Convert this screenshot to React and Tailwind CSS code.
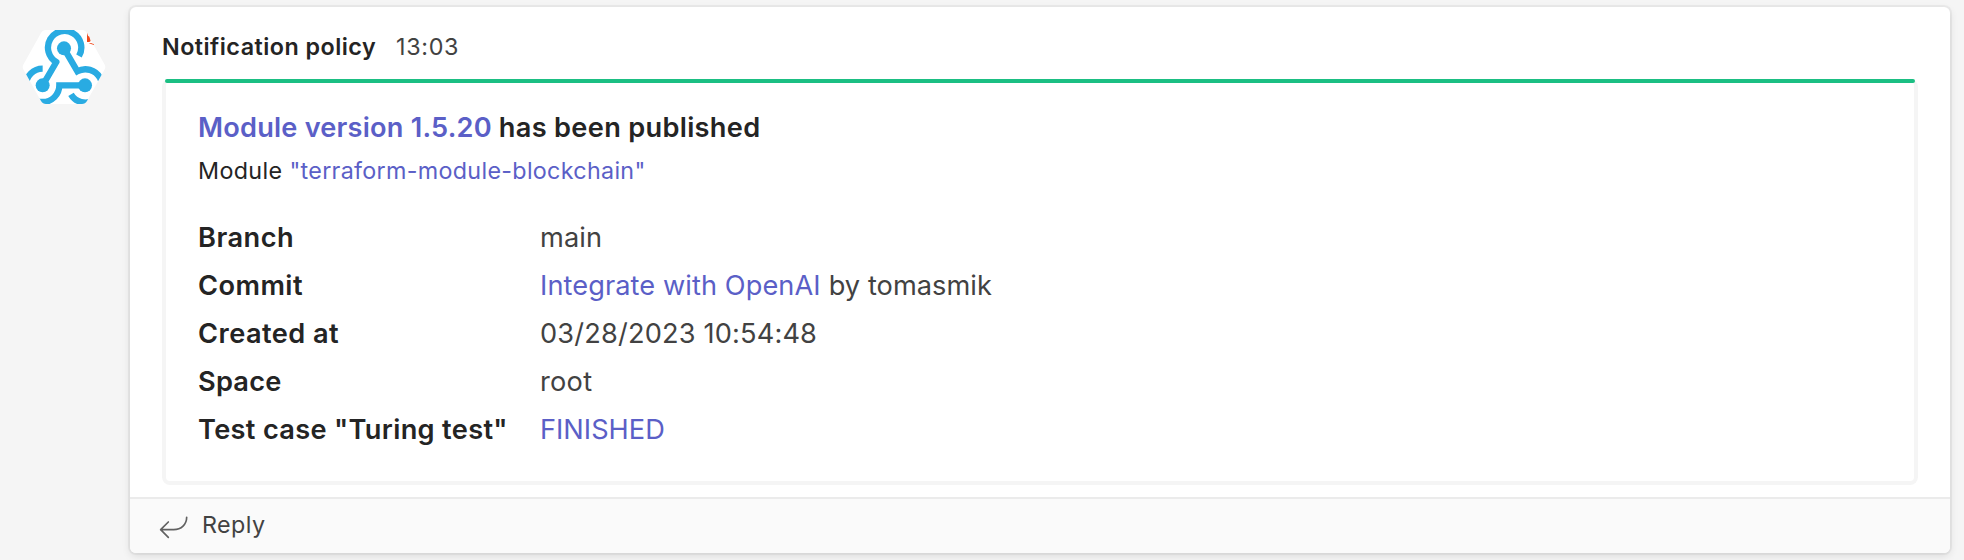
const facts = [
  {
    label: "Branch",
    labelClass: "tracking-[0.5px]",
    value: <span className="tracking-[0.1px]">main</span>,
  },
  {
    label: "Commit",
    labelClass: "tracking-[0.45px]",
    value: (
      <>
        <a className="tracking-[0.08px] text-[#5b5fc7]">Integrate with OpenAI</a>
        <span className="ml-2 tracking-[0.05px]">by tomasmik</span>
      </>
    ),
  },
  {
    label: "Created at",
    labelClass: "tracking-[0.45px]",
    value: <span className="tracking-[0.16px]">03/28/2023 10:54:48</span>,
  },
  {
    label: "Space",
    labelClass: "tracking-[0.2px]",
    value: <span className="tracking-[0.25px]">root</span>,
  },
  {
    label: 'Test case "Turing test"',
    labelClass: "tracking-[0.32px]",
    value: <a className="text-[#5b5fc7]">FINISHED</a>,
  },
];

function WebhookAvatar() {
  return (
    <svg className="h-[86px] w-[94px] shrink-0" viewBox="0 0 282 258" fill="none">
      <defs>
        <clipPath id="hexagon">
          <path d="M15 134Q12 129 15 124L69 27Q74 18 84 18H192Q202 18 207 27L261 124Q264 129 261 134L207 231Q202 240 192 240H84Q74 240 69 231Z" />
        </clipPath>
      </defs>
      <g clipPath="url(#hexagon)">
        <rect width="282" height="258" fill="#fff" />
        <g stroke="#29abe2" strokeWidth="19">
          <path d="M183 96A50 50 0 1 0 115 114L74 184" strokeLinejoin="round" />
          <path d="M138 73L178 142A50 50 0 1 1 159 211" />
          <path d="M74 134A50 50 0 1 0 124 184H201" />
        </g>
        <g fill="#29abe2">
          <circle cx="138" cy="73" r="21" />
          <circle cx="74" cy="184" r="21" />
          <circle cx="201" cy="184" r="21" />
        </g>
      </g>
      <path d="M207 26L210 35L214 38L218 51L214 54H207ZM212 59L219 57L228 61V63L219 60Z" fill="#f04a1d" />
    </svg>
  );
}

function ReplyIcon() {
  return (
    <svg className="h-[34px] w-10 shrink-0" viewBox="0 0 120 102" fill="none" stroke="#616161" strokeWidth="5" strokeLinecap="round" strokeLinejoin="round">
      <path d="M43 42L20 65L43 88M20 65H59C82 65 98 49 98 28" />
    </svg>
  );
}

export default function App() {
  return (
    <div className="flex h-[560px] w-full overflow-hidden bg-[#f5f5f5] pl-[18px] font-[Inter,sans-serif] text-[#242424]">
      <div className="w-28 shrink-0 pt-6">
        <WebhookAvatar />
      </div>
      <article className="mt-[7px] mr-[14px] flex h-[546px] flex-1 flex-col overflow-hidden rounded-md bg-white shadow-[0_0_0_2px_#0000000a,0_3px_8px_#0000001c]">
        <div className="h-[490px] px-8 pt-6">
          <header className="flex h-8 items-center gap-[18px] text-[23.3px] leading-8">
            <span className="w-[216px] font-semibold tracking-[0.48px] whitespace-nowrap">Notification policy</span>
            <time className="tracking-[0.7px] text-[#424242]">13:03</time>
          </header>
          <section className="relative mt-4 h-[406px] rounded-lg border-4 border-t-0 border-[#f5f5f5] px-7 pt-[31px]">
            <div className="absolute -left-px -right-px top-0 h-1 rounded-full bg-[#1bbf83]" />
            <h2 className="ml-1 text-[27.2px] leading-9 font-semibold">
              <a className="tracking-[0.2px] text-[#5b5fc7]">Module version 1.5.20</a>
              <span className="ml-[7px] tracking-[0.31px]">has been published</span>
            </h2>
            <p className="mt-[9px] ml-1 text-[23.3px] leading-8">
              <span className="tracking-[0.35px]">Module</span>
              <a className="ml-[7px] tracking-[0.31px] text-[#5b5fc7]">"terraform-module-blockchain"</a>
            </p>
            <dl className="mt-[27px] ml-1 grid grid-cols-[342px_1fr] text-[27.2px] leading-[48px]">
              {facts.map((fact) => (
                <div key={fact.label} className="contents">
                  <dt className={`font-semibold whitespace-nowrap ${fact.labelClass}`}>{fact.label}</dt>
                  <dd className="text-[#424242]">{fact.value}</dd>
                </div>
              ))}
            </dl>
          </section>
        </div>
        <footer className="flex flex-1 items-start border-t-2 border-[#ebebeb] bg-[#fafafa] pt-[9px] pl-6 text-[#424242]">
          <ReplyIcon />
          <span className="mt-px ml-2 text-[23.3px] leading-8 tracking-[0.43px]">Reply</span>
        </footer>
      </article>
    </div>
  );
}
